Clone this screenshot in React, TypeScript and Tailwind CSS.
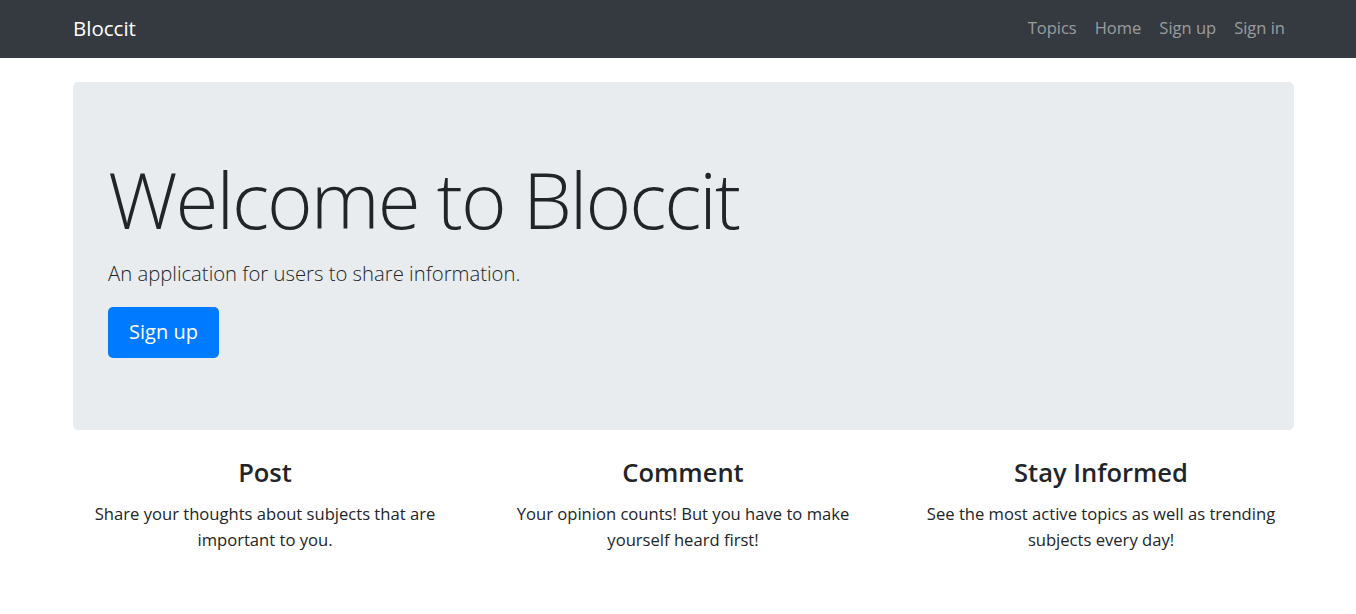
import React from "react";

const font = { fontFamily: '"Open Sans", "Noto Sans", Arial, sans-serif' };

export default function App() {
  return (
    <div className="min-h-screen bg-white text-[#212529]" style={font}>
      <nav className="h-[58px] bg-[#343a40] flex items-center justify-between pl-[73px] pr-[62px] pb-[2px]">
        <a className="text-white text-[20.5px] leading-[30px]">Bloccit</a>
        <ul className="flex items-center text-[16.5px] text-[rgba(255,255,255,0.5)]">
          <li className="px-[9px]">Topics</li>
          <li className="px-[9px]">Home</li>
          <li className="px-[9px]">Sign up</li>
          <li className="px-[9px]">Sign in</li>
        </ul>
      </nav>
      <div className="pl-[73px] pr-[62px] pt-[24px]">
        <div className="bg-[#e9ecef] rounded-[5px] h-[348px] px-[35px] pt-[64px]">
          <h1 className="text-[78px] font-light leading-[1.2] tracking-[-2px] mb-[11px] pt-[7px]">Welcome to Bloccit</h1>
          <p className="text-[20.3px] font-light leading-[30px] mb-[19px]">An application for users to share information.</p>
          <button className="bg-[#007bff] text-white text-[20px] leading-[30px] rounded-[5px] h-[51px] w-[111px]">Sign up</button>
        </div>
      </div>
      <div className="grid grid-cols-3 pl-[56px] pr-[46px] pt-[25px]">
        {[
          ["Post", "Share your thoughts about subjects that are important to you."],
          ["Comment", "Your opinion counts! But you have to make yourself heard first!"],
          ["Stay Informed", "See the most active topics as well as trending subjects every day!"],
        ].map(([t, d]) => (
          <div key={t} className="px-[15px] text-center">
            <h3 className="text-[25.5px] font-semibold leading-[34px] mb-[12px]">{t}</h3>
            <p className="text-[16.6px] leading-[26px]">{d}</p>
          </div>
        ))}
      </div>
    </div>
  );
}
